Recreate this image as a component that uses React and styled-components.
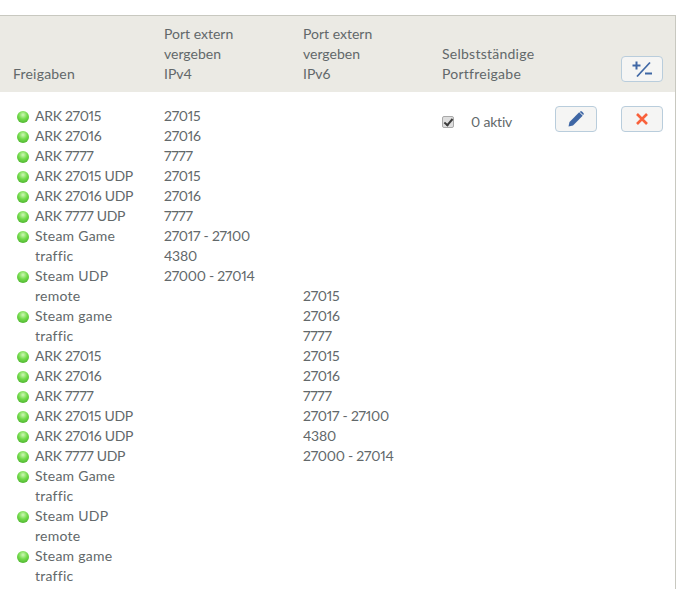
import React from "react";
import styled, { createGlobalStyle } from "styled-components";

const GlobalStyle = createGlobalStyle`
  html, body {
    margin: 0;
    padding: 0;
    background: #fff;
  }
  body {
    font-family: "Lato", "Open Sans", sans-serif;
    font-size: 14px;
    line-height: 20px;
    color: #62686a;
    font-variant-numeric: proportional-nums;
  }
`;

const names = [
  ["ARK 27015"],
  ["ARK 27016"],
  ["ARK 7777"],
  ["ARK 27015 UDP"],
  ["ARK 27016 UDP"],
  ["ARK 7777 UDP"],
  ["Steam Game", "traffic"],
  ["Steam UDP", "remote"],
  ["Steam game", "traffic"],
];

const ports = ["27015", "27016", "7777", "27015", "27016", "7777", "27017 - 27100", "4380", "27000 - 27014"];

export default function App() {
  return (
    <>
      <GlobalStyle />
      <Page>
        <Table>
          <Head>
            <HeadCell $spacing="0.2px">Freigaben</HeadCell>
            <HeadCell>
              Port extern
              <br />
              vergeben
              <br />
              IPv4
            </HeadCell>
            <HeadCell>
              Port extern
              <br />
              vergeben
              <br />
              IPv6
            </HeadCell>
            <HeadCell $spacing="0.25px">
              Selbstständige
              <br />
              Portfreigabe
            </HeadCell>
            <HeadCell />
            <ButtonCell>
              <IconButton aria-label="Hinzufügen">
                <PlusMinusIcon />
              </IconButton>
            </ButtonCell>
          </Head>
          <Body>
            <div>
              {[...names, ...names].map((lines, i) => (
                <NameRow key={i}>
                  <Led />
                  <span>
                    {lines.map((line) => (
                      <Line key={line} $spacing={line.startsWith("ARK") ? "-0.3px" : "0.25px"}>
                        {line}
                      </Line>
                    ))}
                  </span>
                </NameRow>
              ))}
            </div>
            <div>
              {ports.map((port, i) => (
                <Line key={i} $spacing="-0.25px">
                  {port}
                </Line>
              ))}
            </div>
            <Ipv6Column>
              {ports.map((port, i) => (
                <Line key={i} $spacing="-0.25px">
                  {port}
                </Line>
              ))}
            </Ipv6Column>
            <ActiveCell>
              <Check type="checkbox" defaultChecked />
              <span>0 aktiv</span>
            </ActiveCell>
            <ActionCell>
              <IconButton aria-label="Bearbeiten">
                <PencilIcon />
              </IconButton>
            </ActionCell>
            <ActionCell>
              <IconButton aria-label="Löschen">
                <CrossIcon />
              </IconButton>
            </ActionCell>
          </Body>
        </Table>
      </Page>
    </>
  );
}

function PlusMinusIcon() {
  return (
    <svg width="20" height="16" viewBox="0 0 20 16" fill="none" stroke="#3f67a5" strokeWidth="2">
      <path d="M0.500 4.500h8M4.500 0.500v8" />
      <path d="M5 15.500 18 1.500" strokeWidth="1.700" />
      <path d="M13 12.500h7" />
    </svg>
  );
}

function PencilIcon() {
  return (
    <svg width="16" height="16" viewBox="0 0 16 16" fill="#3f67a5">
      <path d="M11.200 1.300 14.700 4.800 5 14.500 0.500 15.500 1.500 11Z" />
      <path d="M12.200 0.600c0.600-0.500 1.300-0.500 1.800 0l1.400 1.400c0.500 0.500 0.500 1.200 0 1.800l-0.300 0.300-3.200-3.200Z" />
    </svg>
  );
}

function CrossIcon() {
  return (
    <svg width="12" height="12" viewBox="0 0 12 12" fill="none" stroke="#f9613b" strokeWidth="2.600">
      <path d="M1 1 11 11M11 1 1 11" />
    </svg>
  );
}

const Page = styled.div`
  width: 676px;
  padding-top: 15px;
`;

const Table = styled.div`
  border-top: 1px solid #c8c8c0;
  border-right: 1px solid #c8c8c0;
`;

const columns = "151px 139px 139px 113px 66px 1fr";

const Head = styled.div`
  display: grid;
  grid-template-columns: ${columns};
  align-items: end;
  height: 76px;
  padding: 0 0 8px 13px;
  box-sizing: border-box;
  background: #ebeae4;
`;

const HeadCell = styled.div`
  min-width: 0;
  letter-spacing: ${(p) => p.$spacing || "normal"};
`;

const ButtonCell = styled.div`
  display: flex;
  margin-bottom: 2px;
`;

const Body = styled.div`
  display: grid;
  grid-template-columns: ${columns};
  align-items: start;
  padding: 14px 0 3px 13px;
`;

const NameRow = styled.div`
  display: flex;
  gap: 6px;
  padding-left: 4px;
`;

const Led = styled.i`
  flex: none;
  width: 12px;
  height: 12px;
  margin-top: 5px;
  border-radius: 50%;
  background: radial-gradient(circle at 50% 32%, #d0f7b8 0, #74dc4c 42%, #3fa524 100%);
`;

const Line = styled.div`
  height: 20px;
  letter-spacing: ${(p) => p.$spacing || "normal"};
`;

const Ipv6Column = styled.div`
  padding-top: 180px;
`;

const ActiveCell = styled.div`
  display: flex;
  align-items: center;
  gap: 17px;
  padding-top: 6px;
  letter-spacing: -0.2px;
`;

const Check = styled.input`
  appearance: none;
  position: relative;
  width: 12px;
  height: 12px;
  margin: 0;
  border: 1px solid #a9a9a9;
  border-radius: 2px;
  background: #dedede;

  &::after {
    content: "";
    position: absolute;
    left: 3px;
    top: 0;
    width: 3px;
    height: 7px;
    border: solid #3c3c3c;
    border-width: 0 2px 2px 0;
    transform: rotate(40deg);
  }
`;

const ActionCell = styled.div`
  display: flex;
`;

const IconButton = styled.button`
  display: flex;
  align-items: center;
  justify-content: center;
  width: 42px;
  height: 26px;
  padding: 0;
  border: 1px solid #b9cddc;
  border-radius: 4px;
  background: #f5f5f4;
`;
